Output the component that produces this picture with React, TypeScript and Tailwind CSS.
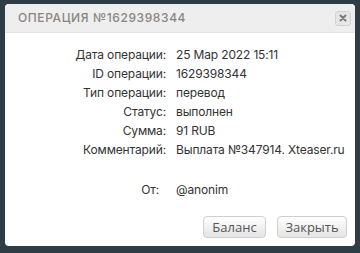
import React from "react";

const rows: [string, string][] = [
  ["Дата операции:", "25 Мар 2022 15:11"],
  ["ID операции:", "1629398344"],
  ["Тип операции:", "перевод"],
  ["Статус:", "выполнен"],
  ["Сумма:", "91 RUB"],
  ["Комментарий:", "Выплата №347914. Xteaser.ru"],
];

export default function App() {
  return (
    <div className="w-[360px] h-[253px] bg-[#2e3d45] pt-[4px] pl-[5px] overflow-hidden" style={{ fontFamily: "Inter, 'Noto Sans', sans-serif" }}>
      <div className="w-[350px] h-[242px] bg-white rounded-[4px] flex flex-col overflow-hidden">
        <div className="h-[29px] bg-[#eeeeee] border-b border-[#e2e2e2] flex items-center pl-[13px] pr-[4px]">
          <div className="text-[12px] tracking-[0.6px] text-[#8b8580] font-medium flex-1">ОПЕРАЦИЯ №1629398344</div>
          <div className="w-[16px] h-[15px] rounded-[3px] border border-[#d2d2d2] bg-[#e6e6e6] flex items-center justify-center">
            <svg width="8" height="8" viewBox="0 0 8 8">
              <path d="M1.5 1.5 L6.5 6.5 M6.5 1.5 L1.5 6.5" stroke="#7a7a7a" strokeWidth="2" strokeLinecap="round" />
            </svg>
          </div>
        </div>
        <div className="pt-[12px] grid grid-cols-[161px_1fr] gap-x-[10px] text-[12px] tracking-[-0.15px] text-[#333] leading-[19px] whitespace-nowrap">
          {rows.map(([l, v]) => (
            <React.Fragment key={l}>
              <div className="text-right">{l}</div>
              <div>{v}</div>
            </React.Fragment>
          ))}
          <div className="text-right mt-[21px] pr-[7px]">От:</div>
          <div className="mt-[21px]">@anonim</div>
        </div>
        <div className="flex justify-end gap-[11px] mt-[17px] pr-[8px]" style={{ fontFamily: "'Open Sans', sans-serif" }}>
          <button className="w-[63px] h-[22px] rounded-[4px] border border-[#cfcfcf] bg-gradient-to-b from-[#ffffff] to-[#e4e4e4] text-[13px] text-[#555] leading-none">Баланс</button>
          <button className="w-[70px] h-[22px] rounded-[4px] border border-[#cfcfcf] bg-gradient-to-b from-[#ffffff] to-[#e4e4e4] text-[13px] text-[#555] leading-none">Закрыть</button>
        </div>
      </div>
    </div>
  );
}
